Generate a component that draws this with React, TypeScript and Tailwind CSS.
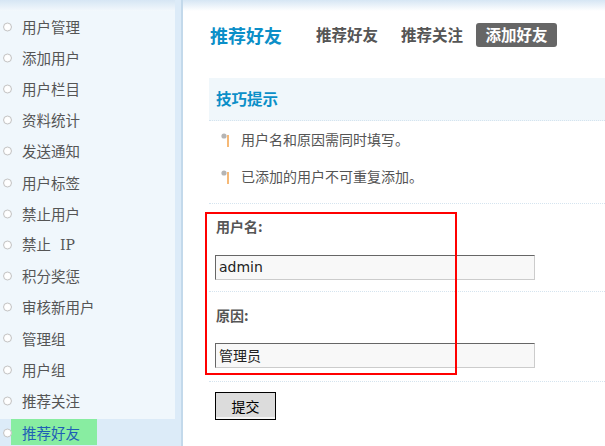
const menu = [
  "用户管理",
  "添加用户",
  "用户栏目",
  "资料统计",
  "发送通知",
  "用户标签",
  "禁止用户",
  "禁止IP",
  "积分奖惩",
  "审核新用户",
  "管理组",
  "用户组",
  "推荐关注",
];

const cjk = "font-['SimSun','Noto_Sans_CJK_SC',sans-serif]";

function Dot() {
  return <span className="absolute left-[3px] top-1/2 -translate-y-1/2 w-[9px] h-[9px] rounded-full border border-[#c4c4c4] bg-white shadow-[inset_0_0_1px_#ddd]" />;
}

function TipBullet() {
  return (
    <svg width="10" height="16" viewBox="0 0 10 16" className="shrink-0">
      <circle cx="3" cy="4" r="2.6" fill="#b5b5b5" />
      <line x1="7" y1="3" x2="7" y2="15" stroke="#f08a1c" strokeWidth="1.2" />
    </svg>
  );
}

function Sidebar() {
  return (
    <div className="flex h-full shrink-0">
      <div className="w-[175px] flex flex-col h-full">
        <div className="h-[11px] bg-gradient-to-b from-[#d6e6f4] to-[#f3f8fc]" />
        <ul className="bg-[#f0f7fc] pb-[3px]">
          {menu.map((m) => (
            <li key={m} className="relative h-[31.2px] flex items-center pl-[22px] text-[14.5px] text-[#555]">
              <Dot />
              {m === "禁止IP" ? (
                <span>禁止<span className="ml-[9px] font-['DejaVu_Serif',serif] text-[14px]">IP</span></span>
              ) : (
                m
              )}
            </li>
          ))}
        </ul>
        <div className="flex-1 bg-[#dcebf8] relative">
          <Dot />
          <span className="ml-[11px] h-[26px] w-[86px] bg-[#88eda1] flex items-center pl-[11px] text-[14.5px] text-[#1f5fb5]">推荐好友</span>
        </div>
      </div>
      <div className="w-[6px] h-full bg-[#dcebf8]" />
      <div className="w-[2px] h-full bg-[#c3d9eb]" />
    </div>
  );
}

function Field({ label, value, pt, mt, pb, latin }: { label: string; value: string; pt: string; mt: string; pb: string; latin?: boolean }) {
  return (
    <div className={`border-b border-dotted border-[#d5e4ef] ${pt} ${pb}`}>
      <div className="ml-[7px] h-[16px] leading-[16px] text-[14px] font-bold text-[#555]">{label}</div>
      <div
        className={`ml-[6px] ${mt} w-[320px] h-[25px] bg-[#f8f8f8] border-t border-l border-t-[#666] border-l-[#666] border-b border-r border-b-[#ccc] border-r-[#ccc] flex items-center pl-[3px] text-[14px] text-[#222] ${latin ? "font-['DejaVu_Sans',sans-serif]" : ""}`}
      >
        {value}
      </div>
    </div>
  );
}

export default function App() {
  return (
    <div className={`w-[605px] h-[446px] overflow-hidden flex bg-white ${cjk}`}>
      <Sidebar />
      <div className="flex-1 flex flex-col relative">
        <div className="h-[11px] bg-gradient-to-b from-[#d6e6f4] to-white shrink-0" />
        <div className="pl-[27px]">
          <div className="mt-[12px] h-[24px] flex items-center">
            <span className="text-[18px] font-bold text-[#0b8fc8]">推荐好友</span>
            <span className="ml-[34px] text-[15.5px] font-bold text-[#555]">推荐好友</span>
            <span className="ml-[23px] text-[15.5px] font-bold text-[#555]">推荐关注</span>
            <span className="ml-[13px] h-[24px] w-[81px] justify-center flex items-center rounded-[3px] bg-[#666] text-white text-[15.5px] font-bold">添加好友</span>
          </div>

          <div className="-ml-[1px] mt-[31px] h-[43px] bg-[#f0f7fb] border-b border-dotted border-[#d5e4ef] flex items-center pl-[7px]">
            <span className="text-[15.5px] font-bold text-[#0b8fc8]">技巧提示</span>
          </div>

          <ul className="-ml-[1px] pb-[8px] border-b border-dotted border-[#d5e4ef]">
            {["用户名和原因需同时填写。", "已添加的用户不可重复添加。"].map((t) => (
              <li key={t} className="h-[37px] flex items-center pl-[12px] gap-[10px] text-[14px] text-[#555]">
                <TipBullet />
                {t}
              </li>
            ))}
          </ul>

          <div className="-ml-[1px]">
            <Field label="用户名:" value="admin" pt="pt-[14px]" mt="mt-[21px]" pb="pb-[11px]" latin />
            <Field label="原因:" value="管理员" pt="pt-[15px]" mt="mt-[20px]" pb="pb-[13px]" />
          </div>

          <button className="-ml-[1px] ml-[5px] mt-[10px] w-[61px] h-[28px] bg-[#dcdcdc] border border-black shadow-[inset_0_-2px_0_#f4f4f4] text-[14px] text-black">
            提交
          </button>
        </div>

        <div className="absolute left-[22px] top-[212px] w-[252px] h-[163px] border-2 border-[#f00] pointer-events-none" />
      </div>
    </div>
  );
}
